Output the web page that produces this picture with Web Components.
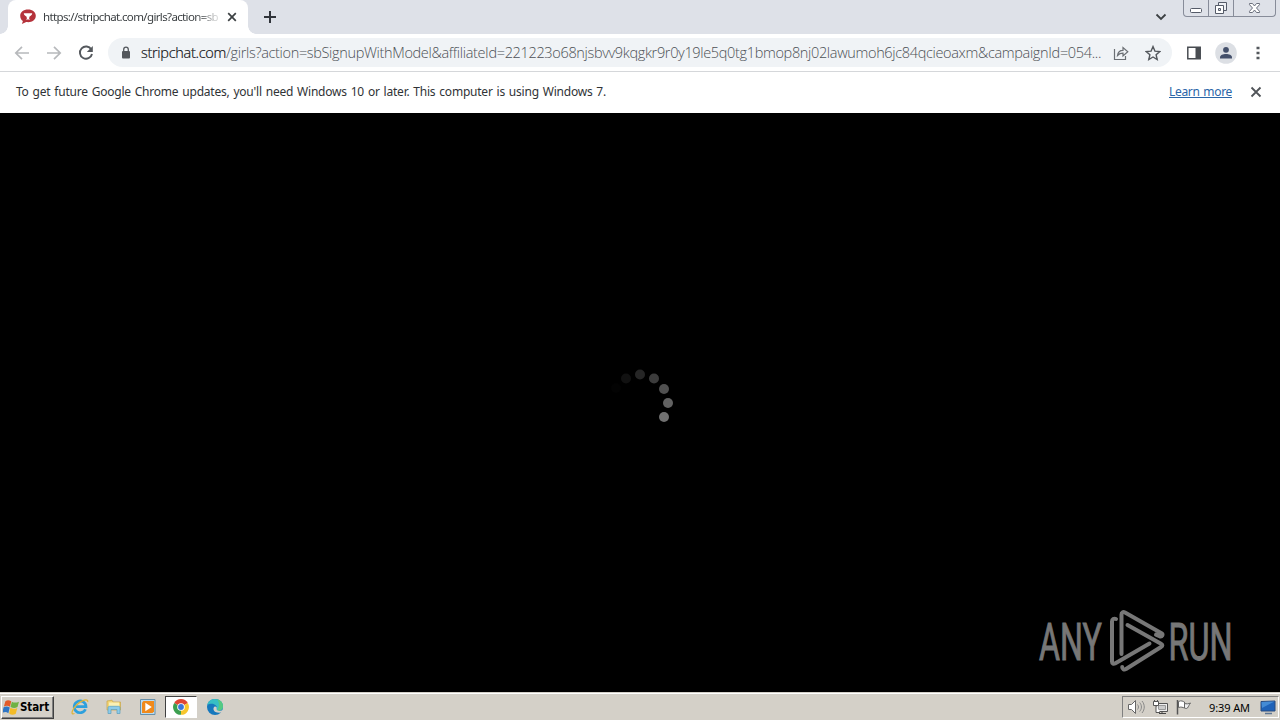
<!DOCTYPE html>
<html lang="en">
<head>
<meta charset="utf-8">
<title>Browser</title>
<style>
    body {
        margin: 0;
        overflow: hidden;
    }
</style>
</head>
<body>
<desktop-screen></desktop-screen>
<script>
const define = (name, html, setup) => {
    const template = document.createElement('template');
    template.innerHTML = html;

    window.customElements.define(name, class extends HTMLElement {
        constructor() {
            super();
            this._shadowRoot = this.attachShadow({ mode: 'open' });
            this._shadowRoot.appendChild(template.content.cloneNode(true));
        }

        connectedCallback() {
            if (setup) setup(this, this._shadowRoot);
        }
    });
};

// One line of text, spaced out to the given width
define('fit-text', `
<style>
    :host {
        display: inline-block;
        flex: none;
        white-space: nowrap;
    }
</style>
<span><slot></slot></span>
`, (host, root) => {
    const $span = root.querySelector('span');
    const nodes = root.querySelector('slot').assignedNodes({ flatten: true });
    const length = nodes.map((node) => node.textContent).join('').length;
    const width = Number(host.getAttribute('width'));
    const natural = $span.getBoundingClientRect().width;
    $span.style.letterSpacing = `${(width - natural) / length}px`;
});

define('tab-strip', `
<style>
    :host {
        display: flex;
        height: 34px;
        background: #dee1e8;
        box-sizing: border-box;
        padding-left: 8px;
        color: #3c4043;
    }
    .tab {
        display: flex;
        align-items: center;
        position: relative;
        box-sizing: border-box;
        width: 240px;
        padding: 0 8px 0 12px;
        background: #fff;
        border-radius: 8px 8px 0 0;
    }
    .tab::before, .tab::after {
        content: '';
        position: absolute;
        bottom: 0;
        width: 8px;
        height: 8px;
        background: radial-gradient(circle at 0 0, transparent 7.5px, #fff 8px);
    }
    .tab::before { left: -8px; }
    .tab::after {
        right: -8px;
        background: radial-gradient(circle at 100% 0, transparent 7.5px, #fff 8px);
    }
    .title {
        width: 176px;
        margin-left: 7px;
        font-size: 11.5px;
        line-height: 18px;
        -webkit-mask-image: linear-gradient(to right, #000 152px, transparent 180px);
    }
    svg { flex: none; }
    .close { margin-left: 5px; }
    .plus { margin: 10px 0 0 15px; }
    .chevron { margin: 11px 16px 0 auto; }
    .controls {
        display: flex;
        box-sizing: border-box;
        width: 93px;
        height: 17px;
        margin-right: 4px;
        border: 1px solid #878c99;
        border-top: 0;
        border-radius: 0 0 4px 4px;
    }
    .controls svg + svg { border-left: 1px solid #878c99; }
</style>
<div class="tab">
    <svg width="16" height="16" viewBox="0 0 16 16">
        <path d="M8 .5C3.500.5.2 3 .2 6.800c0 2.600 1.200 4.300 2.700 5.300l-1 3 4.300-2.100c5 .8 9.600-1.500 9.600-6.200C15.800 3 12.500.5 8 .5z" fill="#b5323b"/>
        <path d="M3.800 4.200h8.400c0 1.800-1.600 2.600-2.600 3.400L9 9.400l1.200 1.200H5.800L7 9.400l-.6-1.800c-1-.8-2.600-1.600-2.600-3.400z" fill="#fff"/>
    </svg>
    <div class="title"><fit-text width="175">https://stripchat.com/girls?action=sb</fit-text></div>
    <svg class="close" width="16" height="16" viewBox="0 0 16 16"><path d="M4.200 4.200l7.600 7.600M11.800 4.200l-7.600 7.600" stroke="#3c4043" stroke-width="1.700"/></svg>
</div>
<svg class="plus" width="14" height="14" viewBox="0 0 14 14"><path d="M7 1v12M1 7h12" stroke="#30343a" stroke-width="2"/></svg>
<svg class="chevron" width="12" height="12" viewBox="0 0 12 12"><path d="M1.500 3.500L6 8l4.500-4.500" fill="none" stroke="#3c4043" stroke-width="1.800"/></svg>
<div class="controls">
    <svg width="24" height="16" viewBox="0 0 24 16"><rect x="6.500" y="8.500" width="11" height="4" rx="1" fill="#fff" stroke="#555b68"/></svg>
    <svg width="24" height="16" viewBox="0 0 24 16"><path d="M9.500 2.500h8v8h-8z" fill="#eef0f4" stroke="#555b68"/><path d="M6.500 5.500h8v8h-8z" fill="#fff" stroke="#555b68"/><path d="M9.500 8.500h2v2h-2z" fill="#dee1e8" stroke="#555b68"/></svg>
    <svg width="41" height="16" viewBox="0 0 41 16"><path d="M15.500 3.500h3l2 2.500 2-2.500h3v1.200L22.500 8l3 3.300v1.200h-3l-2-2.500-2 2.500h-3v-1.200l3-3.300-3-3.300z" fill="#fff" stroke="#6a6f7c"/></svg>
</div>
`);

define('address-bar', `
<style>
    :host {
        display: flex;
        align-items: center;
        height: 38px;
        box-sizing: border-box;
        padding: 0 14px;
        background: #fff;
        border-bottom: 1px solid #d5d7da;
        color: #4c5055;
    }
    svg { flex: none; }
    .nav { display: flex; gap: 16px; }
    .field {
        display: flex;
        align-items: center;
        box-sizing: border-box;
        width: 1064px;
        height: 29px;
        margin-left: 14px;
        padding: 0 10px;
        background: #f0f3f6;
        border-radius: 15px;
    }
    .url {
        display: flex;
        margin: 1px 0 0 7px;
        font: 300 14.5px/20px "Open Sans", "Noto Sans", sans-serif;
    }
    .host {
        color: #101114;
        -webkit-text-stroke: .2px #101114;
    }
    .share { margin-left: 12px; }
    .star { margin-left: 16px; }
    .panel { margin-left: 14px; }
    .avatar { margin-left: 13px; }
    .menu { margin-left: 13px; }
</style>
<div class="nav">
    <svg width="16" height="16" viewBox="0 0 16 16"><path d="M15 8H2M8 1.800L1.800 8 8 14.200" fill="none" stroke="#b7b9bc" stroke-width="1.700"/></svg>
    <svg width="16" height="16" viewBox="0 0 16 16"><path d="M1 8h13M8 1.800L14.200 8 8 14.200" fill="none" stroke="#b7b9bc" stroke-width="1.700"/></svg>
    <svg width="16" height="16" viewBox="0 0 16 16"><path d="M13.300 4.500A6.100 6.100 0 1 0 14 9" fill="none" stroke="#54585d" stroke-width="1.900"/><path d="M14.800 1v6h-6z" fill="#54585d"/></svg>
</div>
<div class="field">
    <svg width="16" height="16" viewBox="0 0 16 16"><rect x="4" y="6" width="8" height="7.500" rx="1" fill="#54585d"/><path d="M5.700 6.500V4.400a2.300 2.300 0 0 1 4.600 0v2.100" fill="none" stroke="#54585d" stroke-width="1.300"/></svg>
    <div class="url"><fit-text class="host" width="85">stripchat.com</fit-text><fit-text width="875">/girls?action=sbSignupWithModel&amp;affiliateId=221223o68njsbvv9kqgkr9r0y19le5q0tg1bmop8nj02lawumoh6jc84qcieoaxm&amp;campaignId=054...</fit-text></div>
    <svg class="share" width="16" height="16" viewBox="0 0 16 16"><path d="M1.500 4v10.500h11V11M4.500 10.500c.4-3.400 2.400-5.200 5.500-5.200V2.500l4.800 4.300L10 11V8.200c-2.400 0-4 .7-5.500 2.300z" fill="none" stroke="#6b6f74" stroke-width="1.200"/></svg>
    <svg class="star" width="16" height="16" viewBox="0 0 16 16"><path d="M8 1.600l1.900 4.500 4.900.4-3.700 3.200 1.100 4.800L8 12l-4.200 2.500 1.100-4.800L1.200 6.500l4.900-.4z" fill="none" stroke="#54585d" stroke-width="1.400"/></svg>
</div>
<svg class="panel" width="16" height="16" viewBox="0 0 16 16"><path d="M1.800 2.300h12.400v11.400H1.800z" fill="#fff" stroke="#494d52" stroke-width="1.500"/><path d="M9.500 2h5v12h-5z" fill="#494d52"/></svg>
<svg class="avatar" width="22" height="22" viewBox="0 0 22 22"><circle cx="11" cy="11" r="10.800" fill="#dcdfe4"/><circle cx="11" cy="7.800" r="2.900" fill="#44506b"/><path d="M5 16.500v-1.200c0-2.200 3-3.400 6-3.400s6 1.200 6 3.400v1.200z" fill="#44506b"/></svg>
<svg class="menu" width="16" height="16" viewBox="0 0 16 16"><path d="M6.500 1.700h3v2.600h-3zM6.500 6.700h3v2.600h-3zM6.500 11.700h3v2.600h-3z" fill="#54585d"/></svg>
`);

define('info-bar', `
<style>
    :host {
        display: flex;
        align-items: center;
        height: 41px;
        box-sizing: border-box;
        padding: 0 17px 2px 16px;
        background: #fff;
        color: #303336;
        font-size: 12px;
        word-spacing: 1px;
    }
    .link {
        margin-left: auto;
        color: #2a65a8;
        text-decoration: underline;
    }
    svg { margin: 1px 0 0 17px; }
</style>
<fit-text width="590"><slot></slot></fit-text>
<fit-text class="link" width="63">Learn more</fit-text>
<svg width="14" height="14" viewBox="0 0 14 14"><path d="M2.500 2.500l9 9M11.500 2.500l-9 9" stroke="#505458" stroke-width="1.800"/></svg>
`);

define('any-run', `
<style>
    :host { display: block; }
    svg { display: block; }
    text {
        font: 400 51px Roboto, sans-serif;
        fill: #777;
        stroke: #777;
        stroke-width: 1;
    }
    path {
        fill: none;
        stroke: #777;
        stroke-width: 4;
        stroke-linecap: round;
        stroke-linejoin: round;
    }
</style>
<svg width="230" height="80" viewBox="0 0 230 80">
    <text transform="translate(19 59.500) scale(.63 1)">ANY</text>
    <path d="M96 19c-2-.8-4 .2-4 2.500v40c0 2 1.500 2.700 3 2l34.500-20"/>
    <path d="M101.500 54V14.500c0-2 1.500-3 3.500-2l36.500 20.800c2 1.300.5 3.700-1.500 3.200l-4-1.800"/>
    <path d="M107.500 25l33.500 18.700c1.800 1 1.800 2.300 0 3.300L106 69c-2 1-3.800 0-3.800-2"/>
    <text transform="translate(148.500 59.500) scale(.635 1)">RUN</text>
</svg>
`);

define('page-view', `
<style>
    :host {
        display: flex;
        flex: 1;
        position: relative;
        align-items: center;
        justify-content: center;
        background: #000;
    }
    any-run {
        position: absolute;
        right: 30px;
        bottom: 12px;
    }
</style>
<svg width="80" height="80" viewBox="600 363 80 80">
    <circle cx="616" cy="388" r="5" fill="#030303"/>
    <circle cx="626" cy="378.500" r="5" fill="#111"/>
    <circle cx="640" cy="374.500" r="5" fill="#262626"/>
    <circle cx="654" cy="378.500" r="5" fill="#3c3c3c"/>
    <circle cx="664" cy="389" r="5" fill="#505050"/>
    <circle cx="668" cy="403" r="5" fill="#626262"/>
    <circle cx="664" cy="417" r="5" fill="#707070"/>
</svg>
<any-run></any-run>
`);

define('task-bar', `
<style>
    :host {
        display: flex;
        align-items: center;
        box-sizing: border-box;
        height: 28px;
        padding: 1px 1px 0;
        background: #d4d0c8;
        border-top: 1px solid #d4d0c8;
        box-shadow: inset 0 1px #fff;
        color: #000;
        font-size: 11px;
    }
    svg { flex: none; }
    .start {
        display: flex;
        align-items: center;
        box-sizing: border-box;
        width: 53px;
        height: 23px;
        padding-left: 1px;
        border: 1px solid;
        border-color: #fff #404040 #404040 #fff;
        box-shadow: inset -1px -1px #808080;
        font: 700 11.5px "DejaVu Sans Condensed", "DejaVu Sans", sans-serif;
    }
    .quick {
        display: flex;
        align-items: center;
        margin-left: 17px;
    }
    .quick > * {
        display: flex;
        align-items: center;
        justify-content: center;
        box-sizing: border-box;
        width: 34px;
        height: 22px;
    }
    .quick .narrow { width: 18px; }
    .quick .wide { width: 50px; }
    .quick .active {
        width: 32px;
        margin: 0 1px 0 8px;
        background: #fff;
        border: 1px solid;
        border-color: #404040 #fff #fff #404040;
    }
    .tray {
        display: flex;
        align-items: center;
        box-sizing: border-box;
        width: 157px;
        height: 22px;
        margin-left: auto;
        padding-left: 4px;
        border: 1px solid;
        border-color: #808080 #fff #fff #808080;
    }
    .tray svg { margin-right: 7px; }
    .tray fit-text { margin: 0 10px 0 9px; }
    .tray svg:last-child { margin: 0; }
</style>
<div class="start">
    <svg width="17" height="17" viewBox="1 .5 15.500 16">
        <path d="M3 2.500C5 1.300 6.500 1.500 8.500 2.700L7.300 7.800C5.500 6.500 3.700 6.600 1.600 7.500z" fill="#e25a28"/>
        <path d="M9.100 3c2 1.200 4 1.200 6.700 0l-1.400 5c-2.200 1.300-4 1.300-6.600.1z" fill="#6fb244"/>
        <path d="M1.300 8.200c2.200-1 4-.9 5.800.3l-1.300 5.300c-1.800-1.300-3.700-1.300-5.700-.2z" fill="#2e75c4"/>
        <path d="M7.700 8.800c2.200 1.200 4 1.200 6.500.1l-1.400 5.400c-2.200 1.300-4.300 1.200-6.300-.2z" fill="#f3bc28"/>
    </svg>
    <fit-text width="29">Start</fit-text>
</div>
<div class="quick">
    <div class="narrow"><svg width="18" height="18" viewBox="0 0 18 18">
        <path d="M14.500 11.200a5.900 5.900 0 1 1 .5-2.500H5" fill="none" stroke="#2da0dd" stroke-width="2.700"/>
        <path d="M3.500 15.500C-.5 17.300.5 12 5.500 7S17.500.2 16.700 4" fill="none" stroke="#dfb43a" stroke-width="1.300"/>
    </svg></div>
    <div class="wide"><svg width="18" height="18" viewBox="0 0 18 18">
        <path d="M2 3l5-.8L8 4h7.500v8H2z" fill="#f3d577" stroke="#c9a545" stroke-width=".7"/>
        <path d="M4 4.500h10v5H4z" fill="#faf0b4"/>
        <path d="M3 15.500V9.800c0-1 .7-1.500 1.500-1.500h9c1 0 1.500.6 1.500 1.500v5.700h-3v-4H6v4z" fill="#8ccbea" stroke="#5a9dbc" stroke-width=".7"/>
    </svg></div>
    <div class="narrow"><svg width="18" height="18" viewBox="0 0 18 18">
        <path d="M1.500 1.500h14.500v15H1.500z" fill="#b9dcf2" stroke="#6790aa"/>
        <path d="M4.500 3H15v10.500L13.500 15H3V4.500z" fill="#f08a1c"/><path d="M6.300 4.800v8.400L12.800 9z" fill="#fff"/>
    </svg></div>
    <div class="active"><svg width="16" height="16" viewBox="0 0 16 16">
        <path d="M8 8L1.200 4A7.800 7.800 0 0 1 14.800 4z" fill="#df4634"/>
        <path d="M8 8l6.800-4A7.800 7.800 0 0 1 8 15.800z" fill="#f7c62d"/>
        <path d="M8 8v7.800A7.800 7.800 0 0 1 1.200 4z" fill="#3c9f50"/>
        <circle cx="8" cy="8" r="3.800" fill="#fff"/><circle cx="8" cy="8" r="2.900" fill="#3a76db"/>
    </svg></div>
    <div><svg width="18" height="18" viewBox="0 0 18 18">
        <circle cx="9" cy="9" r="8" fill="#1678bd"/>
        <path d="M1.300 7C2.300 3 5.300 1 9 1c4.700 0 8 3.300 8 7.200 0 3.400-2.800 5-5.800 4.400-1.500-.3-1-1.200-.5-2.100C11.700 7.800 8 5 4.500 5.800 3 6.100 2 6.600 1.300 7z" fill="#37bfc4"/>
        <path d="M11 1.300c3.800.8 6 3.500 6 6.900 0 3.400-2.800 5-5.800 4.400 1.800-2.700 3-7.600-.2-11.300z" fill="#55c982"/>
        <path d="M9 8.500c1.500 0 2 1 1.700 2.200-.5 1.700 2 2.700 4.800 1.900l1.500-.3v1.800c-4 1.500-9 .5-9.500-2.600C7.300 9.800 8 8.600 9 8.500z" fill="#d4d0c8"/>
    </svg></div>
</div>
<div class="tray">
    <svg width="18" height="16" viewBox="0 0 18 16"><path d="M1.500 5.500h3l4-4v13l-4-4h-3z" fill="#fff" stroke="#666"/><path d="M10.500 5.500c1.300 1.600 1.300 3.400 0 5M12.700 3.500c2.300 2.800 2.300 6.200 0 9M15 2c3 3.700 3 8.300 0 12" fill="none" stroke="#888"/></svg>
    <svg width="16" height="16" viewBox="0 0 16 16"><path d="M4.500 4.500h11v8h-11z" fill="#eee" stroke="#555"/><path d="M6.500 6.500h7v4h-7z" fill="#ccc" stroke="#999"/><path d="M7 14.500h7M10 12.500v2" stroke="#444"/><path d="M1.500 2.500h5v4h-5zM2.500 1v2M5.500 1v2M4 6.500v7h4" fill="#fff" stroke="#555"/></svg>
    <svg width="18" height="16" viewBox="0 0 18 16"><path d="M3.500 2.500c3-1.500 4.500 0 6 .5v6c-2-.5-3-1.500-6-.5z" fill="#fff" stroke="#666"/><path d="M9.500 4.500c2 .5 4 .5 6-.5-1.500 2-2 3.500-3 5-1 .8-2 .5-3 0z" fill="#eee" stroke="#666"/><path d="M2.500 1v14.500" stroke="#555" stroke-width="1.500"/></svg>
    <fit-text width="41">9:39 AM</fit-text>
    <svg width="16" height="16" viewBox="0 0 16 16"><path d="M1 2.500l14-.5v10H1z" fill="#1f62b8" stroke="#2b4a7c"/><path d="M1.500 3l13-.5L2 9z" fill="#448bd5"/><path d="M5 14.500h7" stroke="#5e7693" stroke-width="1.500"/></svg>
</div>
`);

define('desktop-screen', `
<style>
    :host {
        display: flex;
        flex-direction: column;
        width: 1280px;
        height: 720px;
        overflow: hidden;
        font-family: "Noto Sans", "Open Sans", sans-serif;
    }
    tab-strip, address-bar, info-bar, task-bar { flex: none; }
</style>
<tab-strip></tab-strip>
<address-bar></address-bar>
<info-bar>To get future Google Chrome updates, you'll need Windows 10 or later. This computer is using Windows 7.</info-bar>
<page-view></page-view>
<task-bar></task-bar>
`);
</script>
</body>
</html>
